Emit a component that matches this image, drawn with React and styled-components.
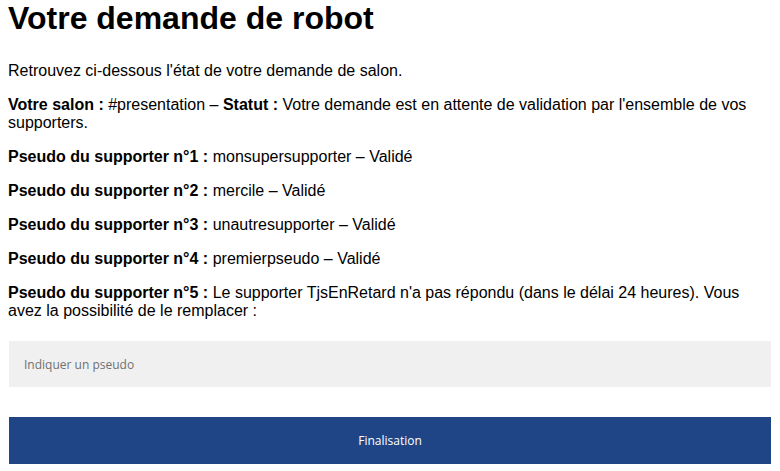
import React from 'react';
import styled, { createGlobalStyle } from 'styled-components';

const GlobalStyle = createGlobalStyle`
  body { margin: 0 8px; background: #fff; color: #000; font-family: "Liberation Sans", Arial, sans-serif; }
`;

const supporters = [
  { n: 1, pseudo: 'monsupersupporter' },
  { n: 2, pseudo: 'mercile' },
  { n: 3, pseudo: 'unautresupporter' },
  { n: 4, pseudo: 'premierpseudo' },
];

const App = () => {
  return (
    <Wrapper>
      <GlobalStyle />
      <Title>Votre demande de robot</Title>
      <Para>Retrouvez ci-dessous l'état de votre demande de salon.</Para>
      <Para>
        <b>Votre salon :</b> #presentation – <b>Statut :</b> Votre demande est en attente de validation par l'ensemble de vos supporters.
      </Para>
      {supporters.map((s) => (
        <Para key={s.n}>
          <b>Pseudo du supporter n°{s.n} :</b> {s.pseudo} – Validé
        </Para>
      ))}
      <Para>
        <b>Pseudo du supporter n°5 :</b> Le supporter TjsEnRetard n'a pas répondu (dans le délai 24 heures). Vous avez la possibilité de le remplacer :
      </Para>
      <Form onSubmit={(e) => e.preventDefault()}>
        <Input type="text" placeholder="Indiquer un pseudo" />
        <Button type="submit">Finalisation</Button>
      </Form>
    </Wrapper>
  );
};

export default App;

const Wrapper = styled.div`
  padding-top: 0;
`;

const Title = styled.h1`
  margin: 0 0 25px;
  font-size: 32px;
  font-weight: bold;
  line-height: 37px;
`;

const Para = styled.p`
  margin: 16px 0;
  font-size: 16px;
  line-height: normal;
  b { font-weight: bold; }
`;

const Form = styled.form`
  display: flex;
  flex-direction: column;
  gap: 30px;
  margin: 21px 1px 0;
`;

const Input = styled.input`
  box-sizing: border-box;
  height: 46px;
  width: 100%;
  border: none;
  outline: none;
  background: #f0f0f0;
  padding: 0 15px;
  font-family: "Open Sans", sans-serif;
  font-size: 12px;
  color: #333;
  &::placeholder { color: #707070; }
`;

const Button = styled.button`
  height: 47px;
  width: 100%;
  border: none;
  background: #1f4587;
  color: #fff;
  font-family: "Open Sans", sans-serif;
  font-size: 12px;
  cursor: pointer;
`;
